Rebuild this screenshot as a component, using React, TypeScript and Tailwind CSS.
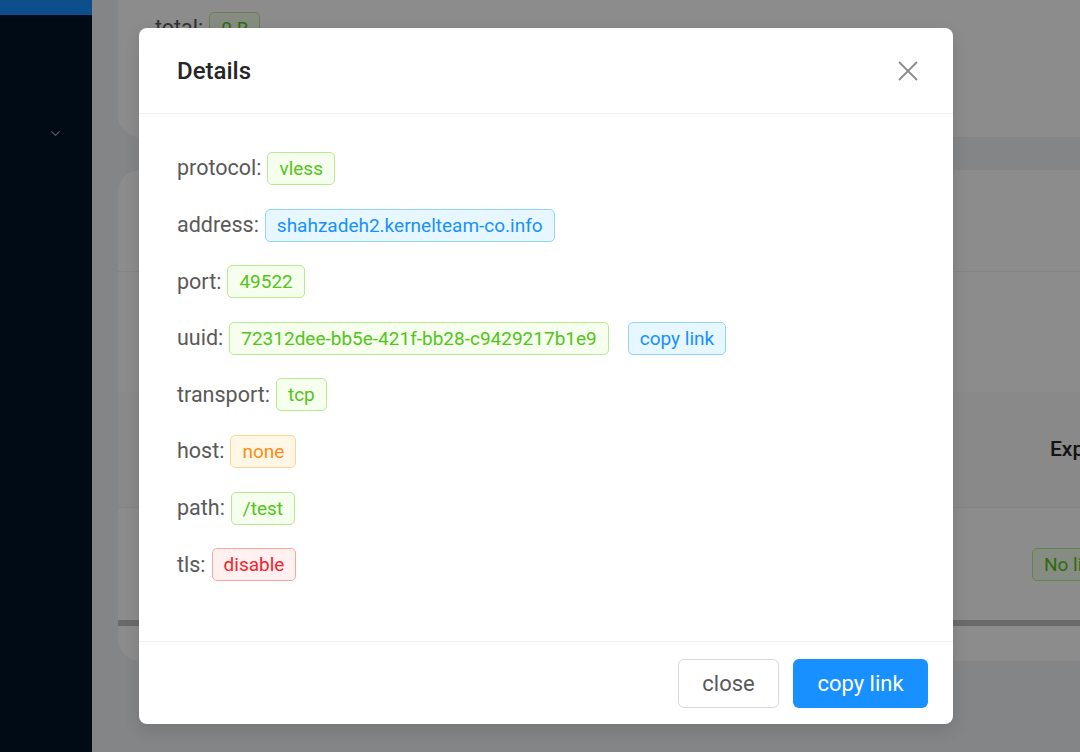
import { ChevronDown } from "lucide-react";

type Tone = "green" | "blue" | "orange" | "red";

const toneClass: Record<Tone, string> = {
  green: "bg-[#f6ffed] border-[#b7eb8f] text-[#52c41a]",
  blue: "bg-[#e6f7ff] border-[#91d5ff] text-[#1890ff]",
  orange: "bg-[#fff7e6] border-[#ffd591] text-[#fa8c16]",
  red: "bg-[#fff1f0] border-[#ffa39e] text-[#f5222d]",
};

function Tag({ tone, children, className = "" }: { tone: Tone; children: React.ReactNode; className?: string }) {
  return (
    <span
      className={`inline-flex h-[33px] items-center rounded-[5px] border px-[11px] text-[19px] leading-none ${toneClass[tone]} ${className}`}
    >
      {children}
    </span>
  );
}

const rows: { label: string; value: string; tone: Tone }[] = [
  { label: "protocol:", value: "vless", tone: "green" },
  { label: "address:", value: "shahzadeh2.kernelteam-co.info", tone: "blue" },
  { label: "port:", value: "49522", tone: "green" },
  { label: "uuid:", value: "72312dee-bb5e-421f-bb28-c9429217b1e9", tone: "green" },
  { label: "transport:", value: "tcp", tone: "green" },
  { label: "host:", value: "none", tone: "orange" },
  { label: "path:", value: "/test", tone: "green" },
  { label: "tls:", value: "disable", tone: "red" },
];

export default function App() {
  return (
    <div className="relative h-[752px] w-[1080px] overflow-hidden font-['Roboto','Liberation_Sans',sans-serif]">
      {/* page behind the modal */}
      <div className="flex h-full w-full">
        <aside className="flex w-[92px] flex-col bg-[#001529]">
          <div className="h-[15px] bg-[#1890ff]" />
          <div className="flex justify-end pr-[29px] pt-[111px] text-white/60">
            <ChevronDown size={15} strokeWidth={2} />
          </div>
        </aside>

        <main className="flex flex-1 flex-col overflow-hidden bg-[#f0f2f5] pl-[26px]">
          {/* traffic card */}
          <div className="mr-[-40px] h-[137px] shrink-0 rounded-b-[22px] bg-white pl-[37px]">
            <div className="flex h-[56px] items-center gap-[6px]">
              <span className="text-[21.5px] text-[#595959]">total:</span>
              <Tag tone="green">0 B</Tag>
            </div>
          </div>

          {/* clients card */}
          <div className="mr-[-40px] mt-[33px] flex h-[491px] shrink-0 flex-col rounded-[22px] bg-white">
            <div className="h-[102px] shrink-0 border-b border-[#f0f0f0]" />
            <div className="h-[120px] shrink-0" />
            <div className="flex h-[116px] shrink-0 items-center border-b border-[#f0f0f0] bg-[#fafafa]">
              <div className="w-[932px] shrink-0" />
              <span className="whitespace-nowrap text-[21px] font-medium text-[#262626]">Expiry</span>
            </div>
            <div className="flex h-[112px] shrink-0 items-center">
              <div className="w-[914px] shrink-0" />
              <Tag tone="green" className="whitespace-nowrap">No limit</Tag>
            </div>
            <div className="h-[6px] shrink-0 bg-[#c1c1c1]" />
            <div className="flex-1" />
          </div>
        </main>
      </div>

      {/* mask + modal */}
      <div className="absolute inset-0 bg-black/45 pl-[139px] pt-[28px]">
        <div className="flex h-[696px] w-[814px] flex-col rounded-[8px] bg-white shadow-[0_6px_16px_rgba(0,0,0,0.12)]">
          <div className="flex h-[86px] shrink-0 items-center justify-between border-b border-[#f0f0f0] pl-[38px] pr-[34px]">
            <span className="text-[24px] font-medium text-[#262626]">Details</span>
            <svg width="22" height="22" viewBox="0 0 22 22" className="text-[#8c8c8c]">
              <path d="M2 2 L20 20 M20 2 L2 20" stroke="currentColor" strokeWidth="1.8" fill="none" />
            </svg>
          </div>

          <div className="flex flex-1 flex-col gap-[23.6px] px-[38px] pt-[38px]">
            {rows.map((r) => (
              <div key={r.label} className="flex h-[33px] items-center">
                <span className="mr-[6px] text-[21.5px] text-[#595959]">{r.label}</span>
                <Tag tone={r.tone}>{r.value}</Tag>
                {r.label === "uuid:" && (
                  <Tag tone="blue" className="ml-[19px]">
                    copy link
                  </Tag>
                )}
              </div>
            ))}
          </div>

          <div className="flex h-[83px] shrink-0 items-center justify-end gap-[14px] border-t border-[#f0f0f0] pr-[25px]">
            <button className="h-[49px] w-[101px] rounded-[6px] border border-[#d9d9d9] bg-white text-[22px] text-[#595959]">
              close
            </button>
            <button className="h-[49px] w-[135px] rounded-[6px] bg-[#1890ff] text-[22px] text-white">
              copy link
            </button>
          </div>
        </div>
      </div>
    </div>
  );
}
